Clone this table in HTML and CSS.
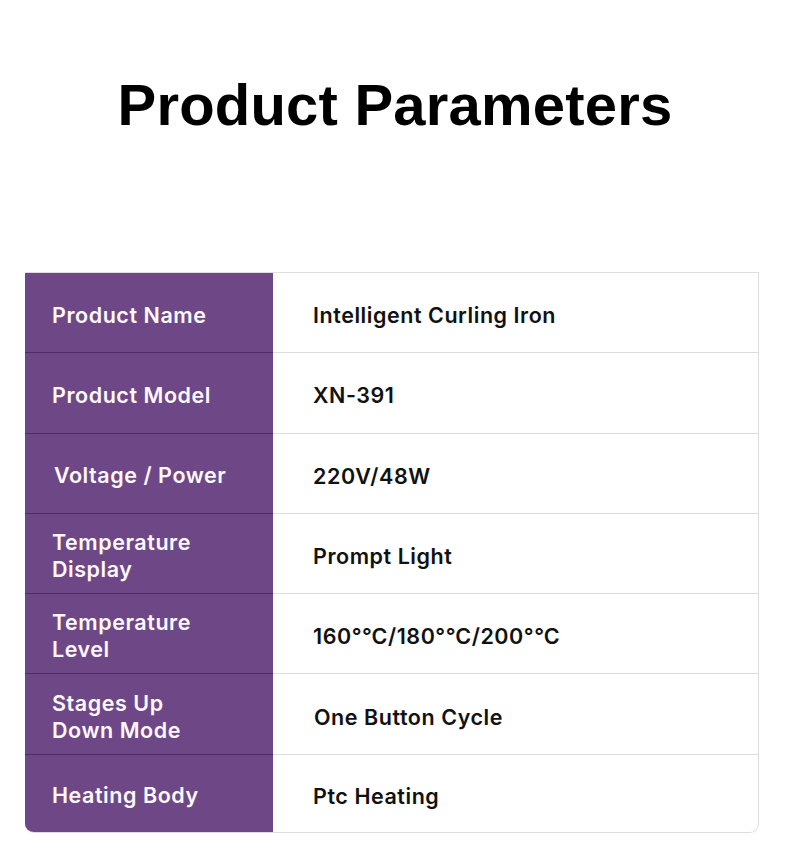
FILE: index.html
```html
<!DOCTYPE html>
<html>
<head>
<meta charset="utf-8">
<link rel="stylesheet" href="styles.css">
</head>
<body>
<div class="page">
  <h1 class="title">Product Parameters</h1>
  <div class="table">
    <div class="row"><div class="label">Product Name</div><div class="value">Intelligent Curling Iron</div></div>
    <div class="row"><div class="label">Product Model</div><div class="value">XN-391</div></div>
    <div class="row"><div class="label shift">Voltage / Power</div><div class="value">220V/48W</div></div>
    <div class="row"><div class="label">Temperature<br>Display</div><div class="value">Prompt Light</div></div>
    <div class="row"><div class="label">Temperature<br>Level</div><div class="value">160°℃/180°℃/200°℃</div></div>
    <div class="row"><div class="label">Stages Up<br>Down Mode</div><div class="value shift">One Button Cycle</div></div>
    <div class="row last"><div class="label">Heating Body</div><div class="value">Ptc Heating</div></div>
  </div>
</div>
</body>
</html>
```

FILE: styles.css
```css
html, body {
  margin: 0;
  padding: 0;
  background: #ffffff;
}
.page {
  width: 790px;
  height: 850px;
  font-family: "Liberation Sans", Arial, sans-serif;
  color: #000;
  padding-top: 72px;
  box-sizing: border-box;
}
.title {
  margin: 0;
  text-align: center;
  font-size: 58px;
  font-weight: 700;
  line-height: 66px;
  letter-spacing: 0.2px;
}
.table {
  margin: 134px 31px 0 25px;
  border: 1px solid #dedede;
  border-left: none;
  border-radius: 0 0 9px 9px;
  overflow: hidden;
}
.row {
  display: flex;
  height: 79.3px;
  border-bottom: 1px solid #dcdcdc;
}
.row.last {
  height: 77px;
  border-bottom: none;
}
.label {
  width: 248px;
  background: #6e4886;
  color: #fcf8fd;
  box-sizing: border-box;
  padding: 5px 0 0 27px;
  display: flex;
  align-items: center;
  font-family: Inter, "Liberation Sans", sans-serif;
  font-size: 21.5px;
  font-weight: 600;
  line-height: 27px;
  letter-spacing: 0.55px;
  box-shadow: 0 1px 0 #4d2e63;
}
.label.shift { padding-left: 29px; }
.row.last .label { box-shadow: none; }
.value {
  flex: 1;
  padding: 5px 0 0 40px;
  display: flex;
  align-items: center;
  font-family: Inter, "Liberation Sans", sans-serif;
  font-size: 21.5px;
  font-weight: 600;
  letter-spacing: 0.55px;
  color: #111;
}
.value.shift { padding-left: 41px; }
```
